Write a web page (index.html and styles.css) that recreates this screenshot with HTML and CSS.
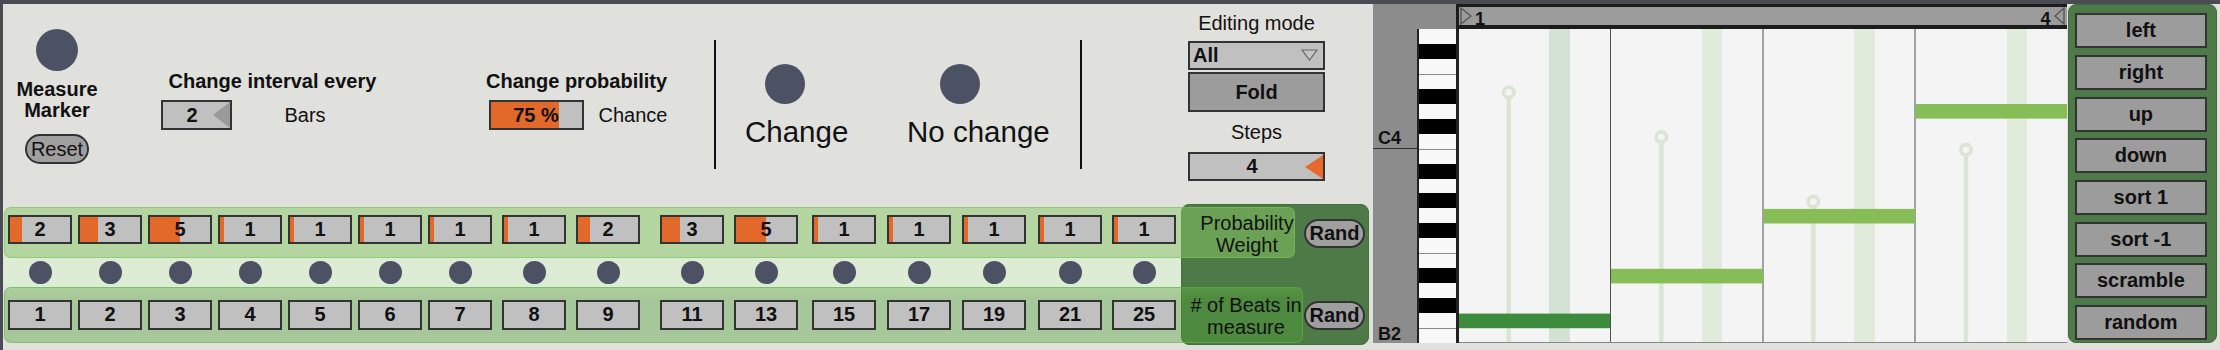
FILE: index.html
```html
<!DOCTYPE html>
<html lang="en">
<head>
    <meta charset="UTF-8">
    <title>Interval Sequencer</title>
    <link rel="stylesheet" href="styles.css">
</head>
<body>
<div class="device">
    <div class="controls">
        <div class="top">
            <div class="marker">
                <div class="led big"></div>
                <div class="marker-label">Measure<br>Marker</div>
                <button class="pill">Reset</button>
            </div>

            <div class="setting interval">
                <div class="setting-title">Change interval every</div>
                <div class="setting-row">
                    <div class="numbox interval-box"><span>2</span><i class="arrow"></i></div>
                    <span class="unit">Bars</span>
                </div>
            </div>

            <div class="setting prob">
                <div class="setting-title">Change probability</div>
                <div class="setting-row">
                    <div class="slider"><div class="slider-fill" style="width:75%"></div><span>75 %</span></div>
                    <span class="unit">Chance</span>
                </div>
            </div>

            <div class="divider"></div>
            <div class="status change"><div class="led mid"></div><span>Change</span></div>
            <div class="status nochange"><div class="led mid"></div><span>No change</span></div>
            <div class="divider"></div>

            <div class="edit">
                <div class="edit-title">Editing mode</div>
                <div class="menu">All
                    <svg width="17" height="12" viewBox="0 0 17 12"><polygon points="1,1 16,1 8.5,11" fill="#c4c4c4" stroke="#666" stroke-width="1.2"/></svg>
                </div>
                <button class="fold">Fold</button>
                <div class="edit-title steps-title">Steps</div>
                <div class="numbox steps-box"><span>4</span><i class="arrow hot"></i></div>
            </div>
        </div>

        <div class="lower">
            <div class="lane-panel"></div>

            <div class="lane weights">
                <div class="cells">
                    <div class="cell"><div class="cell-fill" style="width:20%"></div><span>2</span></div>
                    <div class="cell"><div class="cell-fill" style="width:30%"></div><span>3</span></div>
                    <div class="cell"><div class="cell-fill" style="width:50%"></div><span>5</span></div>
                    <div class="cell"><div class="cell-fill" style="width:7%"></div><span>1</span></div>
                    <div class="cell"><div class="cell-fill" style="width:7%"></div><span>1</span></div>
                    <div class="cell"><div class="cell-fill" style="width:7%"></div><span>1</span></div>
                    <div class="cell"><div class="cell-fill" style="width:7%"></div><span>1</span></div>
                    <div class="cell"><div class="cell-fill" style="width:7%"></div><span>1</span></div>
                    <div class="cell"><div class="cell-fill" style="width:20%"></div><span>2</span></div>
                    <div class="cell"><div class="cell-fill" style="width:30%"></div><span>3</span></div>
                    <div class="cell"><div class="cell-fill" style="width:50%"></div><span>5</span></div>
                    <div class="cell"><div class="cell-fill" style="width:7%"></div><span>1</span></div>
                    <div class="cell"><div class="cell-fill" style="width:7%"></div><span>1</span></div>
                    <div class="cell"><div class="cell-fill" style="width:7%"></div><span>1</span></div>
                    <div class="cell"><div class="cell-fill" style="width:7%"></div><span>1</span></div>
                    <div class="cell"><div class="cell-fill" style="width:7%"></div><span>1</span></div>
                </div>
                <div class="lane-label">Probability<br>Weight</div>
            </div>
            <button class="pill rand rand-top">Rand</button>

            <div class="cells leds">
                <div class="led small"></div><div class="led small"></div><div class="led small"></div><div class="led small"></div>
                <div class="led small"></div><div class="led small"></div><div class="led small"></div><div class="led small"></div>
                <div class="led small"></div><div class="led small"></div><div class="led small"></div><div class="led small"></div>
                <div class="led small"></div><div class="led small"></div><div class="led small"></div><div class="led small"></div>
            </div>

            <div class="lane beats">
                <div class="cells">
                    <div class="cell">1</div><div class="cell">2</div><div class="cell">3</div><div class="cell">4</div>
                    <div class="cell">5</div><div class="cell">6</div><div class="cell">7</div><div class="cell">8</div>
                    <div class="cell">9</div><div class="cell">11</div><div class="cell">13</div><div class="cell">15</div>
                    <div class="cell">17</div><div class="cell">19</div><div class="cell">21</div><div class="cell">25</div>
                </div>
                <div class="lane-label"># of Beats in<br>measure</div>
            </div>
            <button class="pill rand rand-bottom">Rand</button>
        </div>
    </div>

    <div class="roll">
        <div class="roll-head">
            <div class="roll-corner"></div>
            <div class="ruler">
                <div class="ruler-mark">
                    <svg width="12" height="18" viewBox="0 0 12 18"><polygon points="1,1 11,9 1,17" fill="#9b9b9b" stroke="#555" stroke-width="1.4"/></svg>
                    <span>1</span>
                </div>
                <div class="ruler-mark end">
                    <span>4</span>
                    <svg width="11" height="18" viewBox="0 0 11 18"><polygon points="10,1 1,9 10,17" fill="#9b9b9b" stroke="#555" stroke-width="1.4"/></svg>
                </div>
            </div>
        </div>
        <div class="roll-body">
            <div class="octaves">
                <div class="octave c4">C4</div>
                <div class="octave b2">B2</div>
            </div>
            <div class="keys">
                <div class="key"></div><div class="key black"></div><div class="key"></div>
                <div class="key edge"></div><div class="key black"></div><div class="key"></div>
                <div class="key black"></div><div class="key"></div><div class="key edge"></div>
                <div class="key black"></div><div class="key"></div><div class="key black"></div>
                <div class="key"></div><div class="key black"></div><div class="key"></div>
                <div class="key edge"></div><div class="key black"></div><div class="key"></div>
                <div class="key black"></div><div class="key"></div><div class="key edge"></div>
            </div>
            <div class="grid">
                <svg width="608" height="314" viewBox="0 0 608 314">
                    <rect width="608" height="314" fill="#f4f4f4"/>
                    <rect x="90" width="21" height="314" fill="#d3e2d2"/>
                    <rect x="243" width="20" height="314" fill="#e0ebdb"/>
                    <rect x="395" width="21" height="314" fill="#e0ebdb"/>
                    <rect x="548" width="20" height="314" fill="#e0ebdb"/>
                    <g stroke="#505050" stroke-width="1">
                        <line x1="151.5" y1="0" x2="151.5" y2="314"/>
                        <line x1="304" y1="0" x2="304" y2="314"/>
                        <line x1="456" y1="0" x2="456" y2="314"/>
                    </g>
                    <g stroke="#dae6d4" fill="#f4f4f4">
                        <line x1="49.7" y1="63.4" x2="49.7" y2="314" stroke-width="4.5"/>
                        <circle cx="49.7" cy="63.4" r="5.2" stroke-width="3.8"/>
                        <line x1="202.3" y1="108" x2="202.3" y2="314" stroke-width="4.5"/>
                        <circle cx="202.3" cy="108" r="5.2" stroke-width="3.8"/>
                        <line x1="354.3" y1="172.7" x2="354.3" y2="314" stroke-width="4.5"/>
                        <circle cx="354.3" cy="172.7" r="5.2" stroke-width="3.8"/>
                        <line x1="507" y1="120.7" x2="507" y2="314" stroke-width="4.5"/>
                        <circle cx="507" cy="120.7" r="5.2" stroke-width="3.8"/>
                    </g>
                    <rect x="0" y="284.6" width="151" height="14.6" fill="#3d8b3c"/>
                    <rect x="152" y="239.8" width="152" height="14.6" fill="#86bd57"/>
                    <rect x="304.5" y="179.9" width="151.5" height="14.6" fill="#86bd57"/>
                    <rect x="456.5" y="75" width="151.5" height="14.6" fill="#86bd57"/>
                    <line x1="0" y1="313.5" x2="608" y2="313.5" stroke="#888" stroke-width="1"/>
                </svg>
            </div>
        </div>
    </div>

    <div class="actions">
        <button>left</button>
        <button>right</button>
        <button>up</button>
        <button>down</button>
        <button>sort 1</button>
        <button>sort -1</button>
        <button>scramble</button>
        <button>random</button>
    </div>
</div>
</body>
</html>
```

FILE: styles.css
```css
* {
    box-sizing: border-box;
}
body {
    margin: 0;
    background: #e0e0dc;
    font-family: "Liberation Sans", Arial, sans-serif;
    color: #111;
    overflow: hidden;
}
button {
    font-family: inherit;
    color: inherit;
    padding: 0;
    cursor: pointer;
}
.device {
    display: flex;
    width: 2220px;
    height: 350px;
    border-top: 4px solid #4a4c54;
    border-left: 3px solid #4a4c54;
    --cols: 70px 70px 70px 70px 70px 70px 74px 74px 84px 74px 78px 75px 75px 76px 74px 64px;
}

/* upper controls */
.controls {
    width: 1370px;
    display: flex;
    flex-direction: column;
}
.top {
    display: flex;
    align-items: flex-start;
    height: 200px;
}
.led {
    border-radius: 50%;
    background: #4c5263;
}
.led.big { width: 42px; height: 42px; }
.led.mid { width: 40px; height: 40px; }
.led.small { width: 23px; height: 23px; margin-left: 20.5px; }

.marker {
    width: 100px;
    margin-left: 4px;
    padding-top: 25px;
    display: flex;
    flex-direction: column;
    align-items: center;
}
.marker-label {
    margin-top: 8px;
    font-size: 20px;
    font-weight: bold;
    line-height: 21px;
    text-align: center;
}
.pill {
    height: 30px;
    border: 2px solid #333;
    border-radius: 15px;
    background: #9f9f9f;
    font-size: 20px;
}
.marker .pill {
    width: 63.5px;
    margin-top: 13px;
}

.setting {
    padding-top: 66px;
    font-size: 20px;
}
.setting-title {
    font-weight: bold;
    line-height: 23px;
}
.setting-row {
    display: flex;
    align-items: center;
    margin-top: 7px;
}
.interval { width: 325.5px; margin-left: 53.5px; }
.interval .setting-title { margin-left: 8px; }
.interval .unit { margin-left: 53px; }
.prob { width: 227.5px; }
.prob .setting-row { margin-left: 2.5px; }
.prob .unit { margin-left: 15px; }

.numbox {
    display: flex;
    align-items: center;
    height: 30px;
    border: 2px solid #333;
    background: #c0c0c0;
    font-weight: bold;
    font-size: 20px;
}
.numbox span {
    flex: 1;
    text-align: center;
    padding-left: 9px;
}
.arrow {
    width: 0;
    height: 0;
    border-top: 13px solid transparent;
    border-bottom: 13px solid transparent;
    border-right: 17px solid #9a9a9a;
}
.arrow.hot {
    border-top-width: 12.6px;
    border-bottom-width: 12.6px;
    border-right: 18px solid #e8692c;
}
.interval-box { width: 71px; }

.slider {
    position: relative;
    width: 95px;
    height: 30px;
    border: 2px solid #333;
    background: #c0c0c0;
    font-weight: bold;
    text-align: center;
    line-height: 26px;
}
.slider-fill {
    position: absolute;
    left: 0;
    top: 0;
    bottom: 0;
    background: #e3692b;
}
.slider span { position: relative; }

.divider {
    width: 2px;
    height: 129px;
    margin-top: 36px;
    background: #111;
}
.status {
    display: flex;
    flex-direction: column;
    padding-top: 60px;
    font-size: 29.5px;
    line-height: 34px;
}
.status span { margin-top: 10.5px; }
.change { width: 162px; margin-left: 29.5px; }
.change .led { margin-left: 20px; }
.nochange { width: 173px; }
.nochange .led { margin-left: 33px; }

.edit {
    width: 137px;
    margin-left: 106px;
    padding-top: 7.5px;
    display: flex;
    flex-direction: column;
    font-size: 20px;
}
.edit-title {
    line-height: 23px;
    text-align: center;
}
.menu {
    margin-top: 6px;
    height: 29.3px;
    border: 2px solid #333;
    background: #c0c0c0;
    font-weight: bold;
    display: flex;
    align-items: center;
    justify-content: space-between;
    padding: 0 5px 0 3px;
}
.fold {
    margin-top: 2.7px;
    height: 39.6px;
    border: 2px solid #333;
    background: #9c9c9c;
    font-weight: bold;
    font-size: 20px;
}
.steps-title { margin-top: 9.2px; }
.steps-box { margin-top: 7.8px; height: 29.3px; }

/* lanes */
.lower {
    display: grid;
    margin-left: 1px;
    grid-template-columns: 1177px 114px 8px 66px;
    grid-template-rows: 2.5px 51px 29.5px 56px 2px;
}
.lane-panel {
    grid-column: 2 / 5;
    grid-row: 1 / 6;
    background: #4e7a47;
    border: 1px solid #44703e;
    border-radius: 8px;
}
.lane {
    display: flex;
    align-items: flex-start;
    border-radius: 7px;
    padding-left: 3px;
}
.weights {
    grid-column: 1 / 3;
    grid-row: 2;
    background: rgba(135, 199, 100, 0.5);
    border: 1px solid rgba(120, 195, 88, 0.6);
}
.beats {
    grid-column: 1 / 4;
    grid-row: 4;
    background: linear-gradient(rgba(95, 185, 62, 0.42), rgba(80, 163, 52, 0.4) 22%);
    border: 1px solid rgba(100, 180, 75, 0.55);
}
.cells {
    display: grid;
    grid-template-columns: var(--cols);
}
.weights .cells { margin-top: 7px; }
.beats .cells { margin-top: 12.3px; }
.cell {
    position: relative;
    width: 64px;
    height: 29.4px;
    border: 2px solid #333;
    background: #c0c0c0;
    font-weight: bold;
    font-size: 20px;
    line-height: 25.4px;
    text-align: center;
}
.cell-fill {
    position: absolute;
    left: 0;
    top: 0;
    bottom: 0;
    background: #e3692b;
}
.cell span { position: relative; }
.leds {
    grid-column: 1;
    grid-row: 3;
    align-items: center;
    padding-left: 4px;
    background: #dcecd5;
}
.lane-label {
    font-size: 20px;
    text-align: center;
}
.weights .lane-label {
    width: 113px;
    margin: 4px 0 0 5px;
    padding-left: 19px;
    line-height: 22.5px;
}
.beats .lane-label {
    width: 121px;
    margin: 6px 0 0 5px;
    padding-left: 9px;
    line-height: 22px;
}
.rand {
    width: 61px;
    height: 29px;
    font-weight: bold;
    justify-self: end;
    align-self: start;
    margin-right: 4px;
}
.rand-top { grid-column: 3 / 5; grid-row: 2; margin-top: 12.5px; }
.rand-bottom { grid-column: 4; grid-row: 4; margin-top: 14px; }

/* piano roll */
.roll {
    width: 694px;
    display: flex;
    flex-direction: column;
}
.roll-head {
    display: flex;
    height: 25px;
}
.roll-corner {
    width: 83px;
    background: #8c8c8c;
}
.ruler {
    flex: 1;
    display: flex;
    justify-content: space-between;
    padding: 0 2px 0 1px;
    border: solid #1c1c1c;
    border-width: 3px 0 4px 3px;
    background: #9b9b9b;
    font-weight: bold;
    font-size: 18px;
}
.ruler-mark {
    display: flex;
    align-items: flex-end;
    gap: 3px;
}
.ruler-mark.end { gap: 3.5px; }
.ruler-mark svg { align-self: center; }
.ruler-mark span { line-height: 12.5px; }
.roll-body {
    display: flex;
    height: 314px;
}
.octaves {
    width: 44px;
    display: flex;
    flex-direction: column;
    background: #8c8c8c;
    font-weight: bold;
    font-size: 18px;
    line-height: 18px;
}
.octave {
    display: flex;
    align-items: flex-end;
    padding-left: 5px;
}
.octave.c4 {
    height: 119.6px;
    padding-bottom: 1px;
    border-bottom: 1.5px solid #333;
}
.octave.b2 {
    flex: 1;
    padding-bottom: 0.5px;
}
.keys {
    width: 39px;
    display: grid;
    grid-template-rows: repeat(21, 1fr);
    border-left: 2px solid #222;
    background: #f8f8f8;
}
.key.black { background: #000; }
.key.edge { border-top: 1px solid #8a8a8a; }
.grid {
    width: 611px;
    border-left: 3px solid #222;
}
.grid svg { display: block; }

/* transform buttons */
.actions {
    width: 149.5px;
    height: 339.3px;
    margin-left: 0.5px;
    padding: 8.3px 0 0 6.5px;
    display: flex;
    flex-direction: column;
    gap: 6.67px;
    background: #4e7a4a;
    border: 1px solid #43693e;
    border-radius: 8px;
}
.actions button {
    width: 131.7px;
    height: 35px;
    border: 2px solid #333;
    background: #9c9c9c;
    font-weight: bold;
    font-size: 20px;
}
```
